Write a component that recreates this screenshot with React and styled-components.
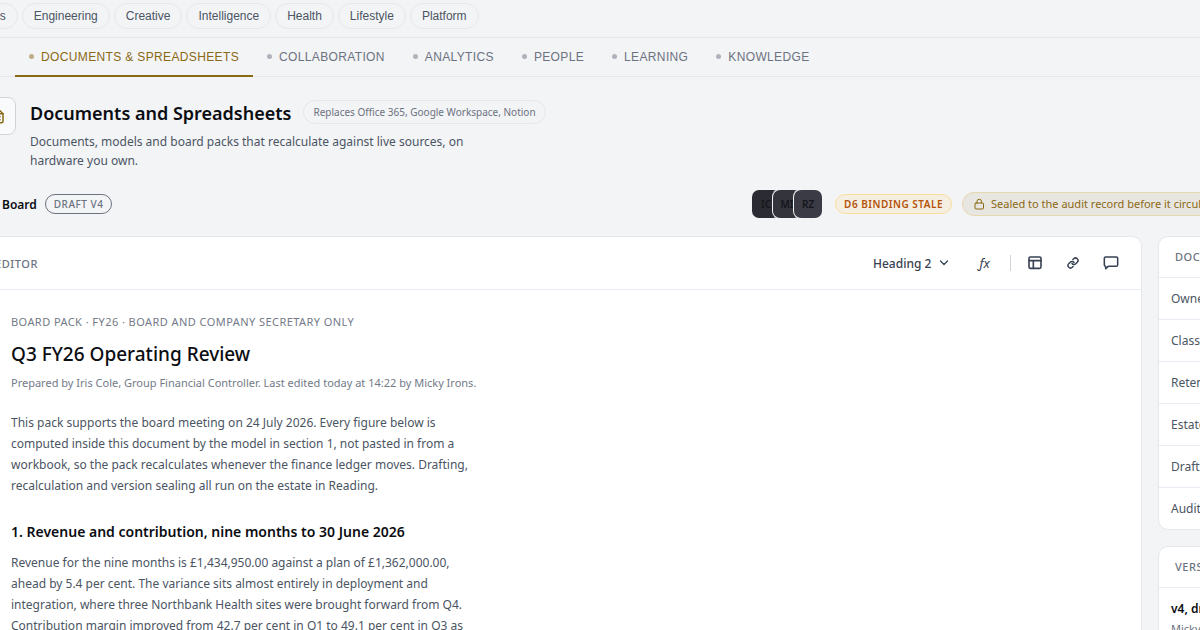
import React from "react";
import styled, { createGlobalStyle } from "styled-components";

const GlobalStyle = createGlobalStyle`
    *, *::before, *::after { box-sizing: border-box; }
    body {
        margin: 0;
        background: #f3f4f6;
        color: #0b0d12;
        font-family: "Noto Sans", "Open Sans", sans-serif;
        font-size: 12px;
        overflow: hidden;
    }
    h1, h2, h3, p, dl, dt, dd { margin: 0; padding: 0; }
    button, select { font-family: inherit; }
`;

const AREAS = ["Business", "Engineering", "Creative", "Intelligence", "Health", "Lifestyle", "Platform"];
const TABS = ["Documents & Spreadsheets", "Collaboration", "Analytics", "People", "Learning", "Knowledge"];
const PEOPLE = [
    { initials: "IC", tone: "#2b2c33" },
    { initials: "MI", tone: "#33343c" },
    { initials: "RZ", tone: "#3b3b45" },
];
const FACTS = [
    ["Owner", "Iris Cole"],
    ["Classification", "Board"],
    ["Retention", "7 years"],
    ["Estate", "Reading"],
    ["Drafted", "Micky Irons"],
    ["Audit", "Sealed"],
];

const DocIcon = () => (
    <svg width="18" height="18" viewBox="0 0 24 24" fill="none" stroke="currentColor" strokeWidth="2" strokeLinejoin="round" strokeLinecap="round">
        <path d="M14 3H6a2 2 0 0 0-2 2v14a2 2 0 0 0 2 2h12a2 2 0 0 0 2-2V9z" />
        <path d="M14 3v6h6M8 13h8M8 17h8" />
    </svg>
);
const LockIcon = () => (
    <svg width="12" height="12" viewBox="0 0 24 24" fill="none" stroke="currentColor" strokeWidth="2" strokeLinejoin="round" strokeLinecap="round">
        <rect x="4" y="10" width="17" height="12" rx="2" />
        <path d="M8 10V7a4.500 4.500 0 0 1 9 0v3" />
    </svg>
);
const ChevronIcon = () => (
    <svg width="12" height="12" viewBox="0 0 24 24" fill="none" stroke="currentColor" strokeWidth="2.6" strokeLinejoin="round" strokeLinecap="round">
        <path d="M5 8l7 7 7-7" />
    </svg>
);
const TableIcon = () => (
    <svg width="16" height="16" viewBox="0 0 24 24" fill="none" stroke="currentColor" strokeWidth="2.4" strokeLinejoin="round" strokeLinecap="round">
        <rect x="3" y="3" width="18" height="17" rx="2" />
        <path d="M3 8.500h18M9.500 20V8.500" />
    </svg>
);
const LinkIcon = () => (
    <svg width="12" height="12" viewBox="0 0 24 24" fill="none" stroke="currentColor" strokeWidth="2.9" strokeLinejoin="round" strokeLinecap="round">
        <path d="M10 13a5 5 0 0 0 7.54.54l3-3a5 5 0 0 0-7.07-7.07l-1.72 1.71" />
        <path d="M14 11a5 5 0 0 0-7.54-.54l-3 3a5 5 0 0 0 7.07 7.07l1.71-1.71" />
    </svg>
);
const CommentIcon = () => (
    <svg width="16" height="16" viewBox="0 0 24 24" fill="none" stroke="currentColor" strokeWidth="2.3" strokeLinejoin="round" strokeLinecap="round">
        <path d="M4 3h16a2 2 0 0 1 2 2v10a2 2 0 0 1-2 2H8l-4 3.500V17a2 2 0 0 1-2-2V5a2 2 0 0 1 2-2z" />
    </svg>
);

const App = () => {
    return (
        <Page>
            <GlobalStyle />
            <AreaNav aria-label="Areas">
                {AREAS.map((area) => (
                    <AreaLink href="#" key={area}>{area}</AreaLink>
                ))}
            </AreaNav>
            <TabNav aria-label="Work">
                {TABS.map((tab, i) => (
                    <Tab href="#" key={tab} $active={i === 0}>{tab}</Tab>
                ))}
            </TabNav>
            <Main>
                <Intro>
                    <IconBox><DocIcon /></IconBox>
                    <IntroText>
                        <TitleRow>
                            <Title>Documents and Spreadsheets</Title>
                            <Replaces>Replaces Office 365, Google Workspace, Notion</Replaces>
                        </TitleRow>
                        <Lead>Documents, models and board packs that recalculate against live sources, on hardware you own.</Lead>
                    </IntroText>
                </Intro>
                <StatusRow>
                    <Audience>Board</Audience>
                    <Draft>Draft v4</Draft>
                    <Avatars>
                        {PEOPLE.map((p) => (
                            <Avatar key={p.initials} $tone={p.tone}>{p.initials}</Avatar>
                        ))}
                    </Avatars>
                    <Stale>D6 binding stale</Stale>
                    <Sealed><LockIcon />Sealed to the audit record before it circulates</Sealed>
                </StatusRow>
                <Columns>
                    <Card>
                        <EditorBar>
                            <PanelLabel>Editor</PanelLabel>
                            <Tools>
                                <StylePicker>
                                    <StyleSelect aria-label="Paragraph style" defaultValue="Heading 2">
                                        <option>Heading 2</option>
                                    </StyleSelect>
                                    <ChevronIcon />
                                </StylePicker>
                                <Tool aria-label="Insert formula"><Formula>ƒx</Formula></Tool>
                                <Divider />
                                <Tool aria-label="Insert table"><TableIcon /></Tool>
                                <Tool aria-label="Insert link"><LinkIcon /></Tool>
                                <Tool aria-label="Comment"><CommentIcon /></Tool>
                            </Tools>
                        </EditorBar>
                        <Doc>
                            <Kicker>Board pack · FY26 · Board and Company Secretary only</Kicker>
                            <DocTitle>Q3 FY26 Operating Review</DocTitle>
                            <Byline>Prepared by Iris Cole, Group Financial Controller. Last edited today at 14:22 by Micky Irons.</Byline>
                            <Para>
                                This pack supports the board meeting on 24 July 2026. Every figure below is computed inside this
                                document by the model in section 1, not pasted in from a workbook, so the pack recalculates whenever
                                the finance ledger moves. Drafting, recalculation and version sealing all run on the estate in Reading.
                            </Para>
                            <DocHeading>1. Revenue and contribution, nine months to 30 June 2026</DocHeading>
                            <Para>
                                Revenue for the nine months is £1,434,950.00 against a plan of £1,362,000.00, ahead by 5.4 per cent.
                                The variance sits almost entirely in deployment and integration, where three Northbank Health sites
                                were brought forward from Q4. Contribution margin improved from 42.7 per cent in Q1 to 49.1 per cent
                                in Q3 as
                            </Para>
                        </Doc>
                    </Card>
                    <Side>
                        <Card>
                            <SideHead>Document</SideHead>
                            <Facts>
                                {FACTS.map(([name, value]) => (
                                    <Fact key={name}><dt>{name}</dt><dd>{value}</dd></Fact>
                                ))}
                            </Facts>
                        </Card>
                        <Card>
                            <SideHead>Versions</SideHead>
                            <Version>
                                <strong>v4, draft</strong>
                                <span>Micky Irons</span>
                            </Version>
                        </Card>
                    </Side>
                </Columns>
            </Main>
        </Page>
    );
};

const Page = styled.div`
    height: 100vh;
    margin: 0 -260px 0 -55px;
    overflow: hidden;
`
const AreaNav = styled.nav`
    display: flex;
    gap: 4px;
    padding: 3px 0 8px;
    border-bottom: 1px solid #e5e7eb;
`
const AreaLink = styled.a`
    padding: 0 11px;
    border: 1px solid #e5e7eb;
    border-radius: 13px;
    font: 12px/24px "Liberation Sans", Arial, sans-serif;
    color: #4b5563;
    text-decoration: none;
`
const TabNav = styled.nav`
    display: flex;
    padding-left: 70px;
    border-bottom: 1px solid #e5e7eb;
`
const Tab = styled.a`
    display: flex;
    align-items: center;
    gap: 7px;
    height: 39px;
    margin-bottom: -1px;
    padding: 0 14px;
    border-bottom: 2px solid ${(p) => (p.$active ? "#8a6914" : "transparent")};
    font: 12px "Liberation Sans", Arial, sans-serif;
    letter-spacing: 0.03em;
    text-transform: uppercase;
    text-decoration: none;
    color: ${(p) => (p.$active ? "#8a6914" : "#6b7280")};

    &::before {
        content: "";
        width: 5px;
        height: 5px;
        border-radius: 50%;
        background: currentColor;
        opacity: 0.5;
    }
`
const Main = styled.main`
    padding: 20px 32px 0 33px;
`
const Intro = styled.header`
    display: flex;
    gap: 14px;
`
const IconBox = styled.div`
    display: flex;
    align-items: center;
    justify-content: center;
    width: 38px;
    height: 38px;
    border: 1px solid #d1d5db;
    border-radius: 8px;
    background: #f9fafb;
    color: #8a6914;
`
const IntroText = styled.div`
    display: flex;
    flex-direction: column;
    gap: 5px;
`
const TitleRow = styled.div`
    display: flex;
    align-items: center;
    gap: 12px;
`
const Title = styled.h1`
    padding-top: 2px;
    font-size: 18px;
    line-height: 28px;
    font-weight: 600;
`
const Replaces = styled.span`
    padding: 0 9px;
    border: 1px solid #e5e7eb;
    border-radius: 12px;
    font-size: 10px;
    line-height: 22px;
    color: #6b7280;
`
const Lead = styled.p`
    max-width: 440px;
    line-height: 19px;
    color: #4b5563;
`
const StatusRow = styled.div`
    display: flex;
    align-items: center;
    margin-top: 20px;
`
const Audience = styled.strong`
    padding-left: 24px;
    font-weight: 600;
`
const Pill = styled.span`
    padding: 0 8px;
    border: 1px solid;
    border-radius: 10px;
    font-size: 10px;
    line-height: 18px;
    text-transform: uppercase;
    letter-spacing: 0.05em;
`
const Draft = styled(Pill)`
    margin-left: 8px;
    font-weight: 500;
    color: #6b7280;
`
const Stale = styled(Pill)`
    margin: 0 10px 0 13px;
    border-color: #fbdf9d;
    background: #f5efe2;
    font-weight: 600;
    color: #b45309;
`
const Avatars = styled.div`
    display: flex;
    margin-left: auto;
`
const Avatar = styled.span`
    width: 28px;
    height: 28px;
    border-radius: 7px;
    box-shadow: 0 0 0 1px #f3f4f6;
    background: ${(p) => p.$tone};
    font-size: 10px;
    line-height: 28px;
    font-weight: 600;
    text-align: center;
    color: #15161c;

    & + & { margin-left: -7px; }
`
const Sealed = styled.span`
    display: flex;
    align-items: center;
    gap: 6px;
    width: 466px;
    padding: 0 10px;
    border: 1px solid #e6d9b0;
    border-radius: 12px;
    background: #e8e6e0;
    font-size: 11px;
    line-height: 22px;
    color: #8a6914;
`
const Columns = styled.div`
    display: grid;
    grid-template-columns: minmax(0, 1fr) 270px;
    gap: 16px;
    margin-top: 18px;
`
const Card = styled.section`
    border: 1px solid #e5e7eb;
    border-radius: 10px;
    background: #fff;
`
const EditorBar = styled.div`
    display: flex;
    align-items: center;
    justify-content: space-between;
    height: 53px;
    padding: 0 12px 0 16px;
    border-bottom: 1px solid #e9ebf2;
`
const PanelLabel = styled.h2`
    font-size: 11px;
    font-weight: 500;
    letter-spacing: 0.05em;
    text-transform: uppercase;
    color: #6b7280;
`
const Tools = styled.div`
    display: flex;
    align-items: center;
    gap: 2px;
    color: #374151;
`
const StylePicker = styled.div`
    display: grid;
    align-items: center;
    margin-right: 14px;

    & > * { grid-area: 1 / 1; }
    & > svg { justify-self: end; pointer-events: none; }
`
const StyleSelect = styled.select`
    appearance: none;
    border: 0;
    padding: 0 18px 0 0;
    background: none;
    font-size: 12px;
    font-weight: 500;
    color: #374151;
`
const Tool = styled.button`
    display: flex;
    align-items: center;
    justify-content: center;
    width: 36px;
    height: 32px;
    padding: 0;
    border: 0;
    background: none;
    color: inherit;
`
const Formula = styled.em`
    font-size: 13px;
`
const Divider = styled.span`
    width: 1px;
    height: 16px;
    margin: 0 4px 0 6px;
    background: #d1d5db;
`
const Doc = styled.article`
    max-width: 532px;
    padding: 22px 32px;
`
const Kicker = styled.p`
    font-size: 11px;
    line-height: 20px;
    letter-spacing: 0.04em;
    text-transform: uppercase;
    white-space: nowrap;
    color: #737a88;
`
const DocTitle = styled.h2`
    margin-top: 7px;
    font-size: 19px;
    line-height: 30px;
    font-weight: 500;
`
const Byline = styled.p`
    margin-top: 4px;
    font-size: 11px;
    line-height: 20px;
    white-space: nowrap;
    color: #737a88;
`
const Para = styled.p`
    margin: 19px 0 25px;
    line-height: 21px;
    color: #4b5563;
`
const DocHeading = styled.h3`
    margin-bottom: -10px;
    font-size: 14px;
    line-height: 22px;
    font-weight: 600;
    white-space: nowrap;
`
const Side = styled.aside`
    display: flex;
    flex-direction: column;
    gap: 16px;
`
const SideHead = styled(PanelLabel)`
    padding: 0 16px;
    line-height: 40px;
`
const Facts = styled.dl``
const Fact = styled.div`
    display: flex;
    justify-content: space-between;
    padding: 0 12px;
    border-top: 1px solid #e9ebf2;
    line-height: 41px;
    color: #4b5563;
`
const Version = styled.div`
    display: flex;
    flex-direction: column;
    padding: 11px 12px;
    border-top: 1px solid #e9ebf2;
    line-height: 20px;

    strong { font-weight: 600; }
    span { font-size: 11px; color: #6b7280; }
`

export default App;
